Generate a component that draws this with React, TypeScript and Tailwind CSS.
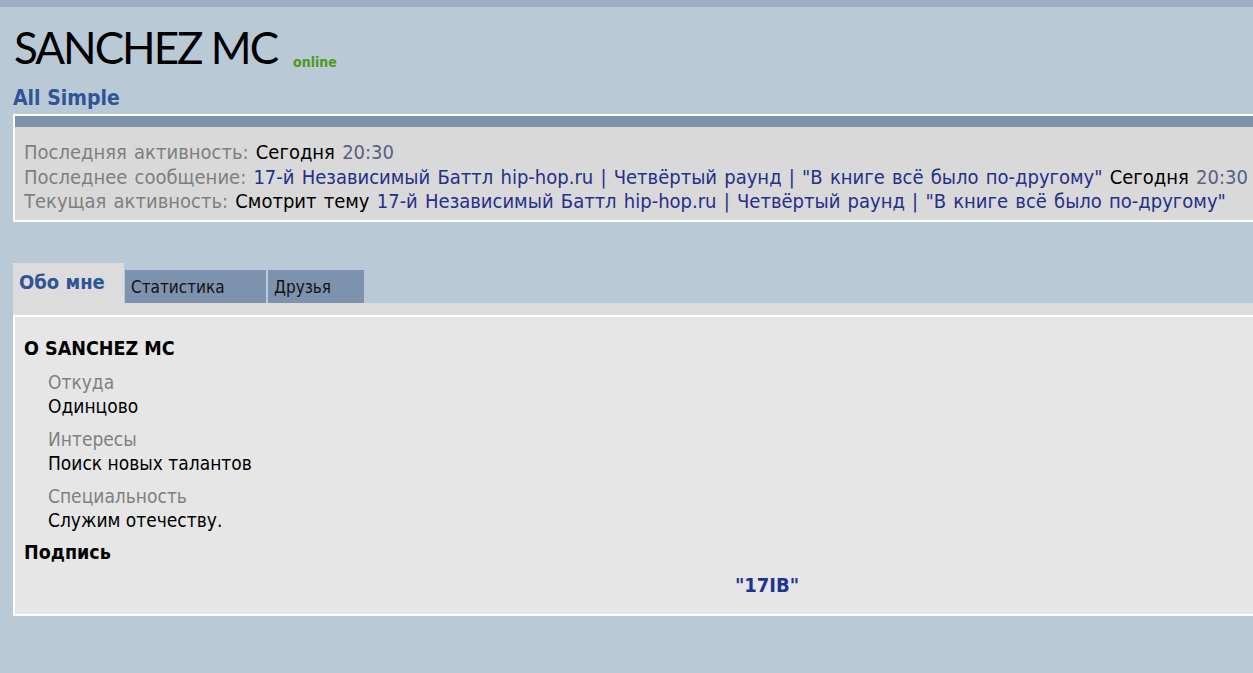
import React from "react";

const font = { fontFamily: '"DejaVu Sans Condensed", "DejaVu Sans", sans-serif' };

function InfoLine({ children }: { children: React.ReactNode }) {
  return <div className="leading-[24.5px] whitespace-nowrap">{children}</div>;
}

function Field({ label, value }: { label: string; value: string }) {
  return (
    <div className="pl-6 mb-[9px]">
      <div className="text-[#808080] leading-[24px]">{label}</div>
      <div className="text-black leading-[24px]">{value}</div>
    </div>
  );
}

export default function App() {
  const link = "text-[#262f8a]";
  const label = "text-[#7f7f7f]";
  const time = "text-[#5c6081]";
  return (
    <div className="w-[1253px] h-[673px] overflow-hidden bg-[#bac9d6]" style={font}>
      <div className="h-[7px] bg-[#9daec3]" />
      <div className="w-[1520px] pl-[13px]">
        <div className="flex items-end gap-4 pt-[17px]">
          <h1
            className="text-[44px] leading-[46px] text-black font-normal pl-px tracking-[-2px]"
            style={{ fontFamily: "Lato, sans-serif" }}
          >
            SANCHEZ MC
          </h1>
          <span className="text-[14px] font-bold text-[#4c9a1c] mb-[-3px]">online</span>
        </div>
        <div className="text-[21px] font-bold text-[#2f5597] leading-[26px] mt-[15px]">All Simple</div>

        <div className="mt-[3px] border-2 border-white bg-[#d9d9d9] w-[1506px]">
          <div className="h-[11px] bg-[#7d92ad]" />
          <div className="px-[9px] pt-[13px] pb-[6px] text-[20px] [word-spacing:1.5px]">
            <InfoLine>
              <span className={label}>Последняя активность:</span> <span className="text-black">Сегодня</span>{" "}
              <span className={time}>20:30</span>
            </InfoLine>
            <InfoLine>
              <span className={label}>Последнее сообщение:</span>{" "}
              <span className={link}>
                17-й Независимый Баттл hip-hop.ru | Четвёртый раунд | "В книге всё было по-другому"
              </span>{" "}
              <span className="text-black">Сегодня</span> <span className={time}>20:30</span>
            </InfoLine>
            <InfoLine>
              <span className={label}>Текущая активность:</span> <span className="text-black">Смотрит тему</span>{" "}
              <span className={link}>
                17-й Независимый Баттл hip-hop.ru | Четвёртый раунд | "В книге всё было по-другому"
              </span>
            </InfoLine>
          </div>
        </div>

        <div className="mt-[41px] w-[1506px]">
          <div className="flex items-end h-[40px]">
            <div className="w-[111px] h-[40px] bg-[#dcdcdc] text-[20px] font-bold text-[#2f5597] pl-[6px] pt-[4px]">
              Обо мне
            </div>
            <div className="ml-px w-[141px] h-[33px] bg-[#7d92ad] text-[17px] text-[#111] pl-[6px] pt-[5px]">
              Статистика
            </div>
            <div className="ml-[2px] w-[96px] h-[33px] bg-[#7d92ad] text-[17px] text-[#111] pl-[6px] pt-[5px]">
              Друзья
            </div>
          </div>
          <div className="h-[12px] bg-[#dcdcdc]" />
          <div className="border-t-2 border-l-2 border-b-2 border-white bg-[#e6e6e6] px-[9px] pt-[20px] pb-[17px] text-[19px]">
            <div className="font-bold text-black leading-[24px] mb-[9px] text-[19.5px]">О SANCHEZ MC</div>
            <Field label="Откуда" value="Одинцово" />
            <Field label="Интересы" value="Поиск новых талантов" />
            <Field label="Специальность" value="Служим отечеству." />
            <div className="font-bold text-black leading-[24px] text-[19.5px]">Подпись</div>
            <div className="text-center font-bold text-[#1d3591] leading-[24px] mt-[8px] text-[20px]">"17IB"</div>
          </div>
        </div>
      </div>
    </div>
  );
}
